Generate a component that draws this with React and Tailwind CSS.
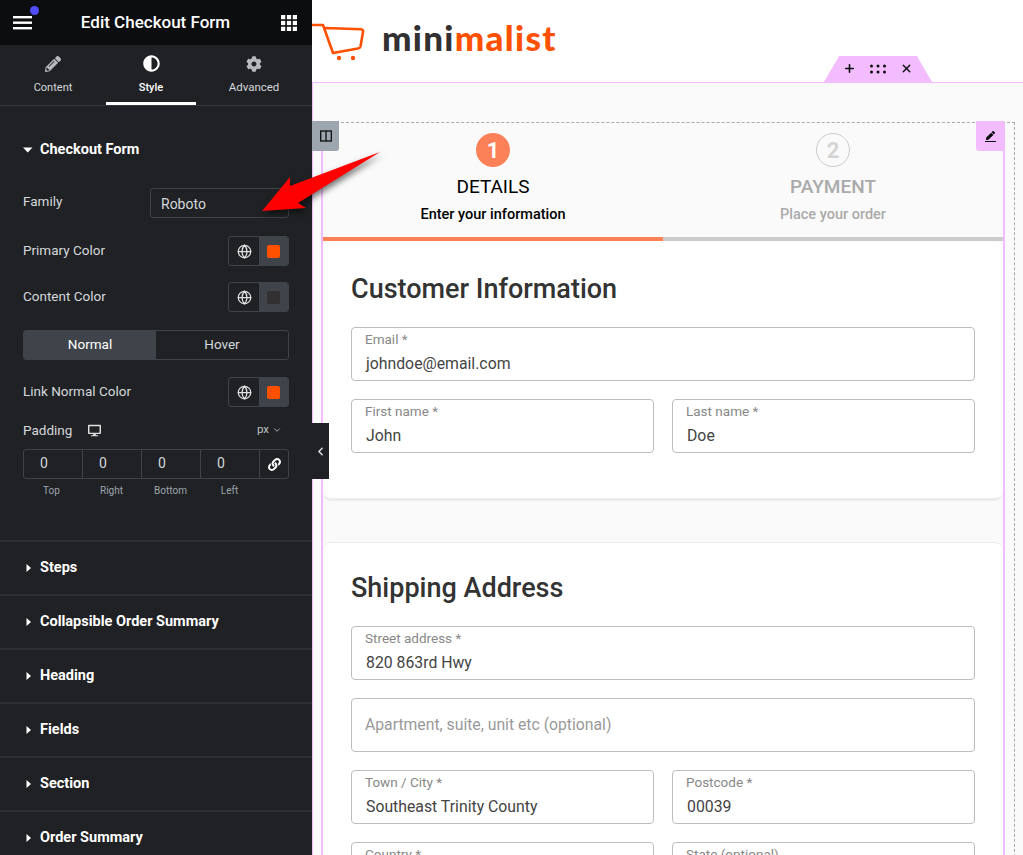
import React from 'react';
import { FaPencilAlt, FaAdjust, FaCog, FaDesktop, FaLink, FaPen } from 'react-icons/fa';
import { FiPlus, FiX, FiChevronDown, FiChevronLeft } from 'react-icons/fi';
import { Globe } from 'lucide-react';

const Caret = ({ down }) => (
    <svg width="10" height="10" viewBox="0 0 10 10" className="shrink-0" fill="#fff">
        {down ? <path d="M0 2.5h9.5L4.75 7.5z" /> : <path d="M2.5 1l4.5 4-4.5 4z" />}
    </svg>
);

const ColorRow = ({ label, color, className = '' }) => (
    <div className={`flex items-center justify-between h-[30px] pl-[23px] pr-[23px] ${className}`}>
        <span className="text-[13.5px] text-[#d5d8dc] -mt-[2px]">{label}</span>
        <div className="flex w-[61px] h-[30px] border border-[#3f444b] rounded-[3px] overflow-hidden">
            <div className="w-[30px] flex items-center justify-center">
                <Globe size={15} color="#e0e1e3" strokeWidth={2} />
            </div>
            <div className="flex-1 bg-[#3f444b] flex items-center justify-center">
                <div className={`w-[13px] h-[13px] rounded-[2px] ${color}`}></div>
            </div>
        </div>
    </div>
);

const Section = ({ title }) => (
    <div className="h-[54px] shrink-0 border-t-2 border-[#2d2f33] flex items-center gap-[6px] pl-[24px]">
        <Caret />
        <span className="text-[14.5px] font-bold text-white">{title}</span>
    </div>
);

const Field = ({ label, value, placeholder }) => (
    <div className="flex-1 min-h-[54px] border border-[#bdbdbd] rounded-[4px] bg-white pl-[13px] flex flex-col justify-center pb-[3px]">
        {placeholder ? (
            <span className="text-[15.75px] text-[#999] pt-[3px]">{placeholder}</span>
        ) : (
            <>
                <span className="text-[13.5px] leading-[18px] text-[#888]">{label}</span>
                <span className="text-[15.8px] leading-[24px] mt-[4px] ml-[1px] text-[#444]">{value}</span>
            </>
        )}
    </div>
);

const Sidebar = () => (
    <div className="w-[312px] h-[855px] shrink-0 bg-[#1f2124] flex flex-col overflow-hidden">
        <div className="h-[45px] shrink-0 bg-[#0c0d0e] flex items-center justify-between pl-[13px] pr-[15px] relative">
            <svg width="20" height="14" viewBox="0 0 20 14" fill="#fff">
                <rect y="0" width="19" height="2.4" />
                <rect y="5.5" width="19" height="2.4" />
                <rect y="11" width="19" height="2.4" />
            </svg>
            <div className="absolute top-[6px] left-[30px] w-[9px] h-[9px] rounded-full bg-[#524cff]"></div>
            <span className="text-[17px] font-medium text-white -ml-[3px]">Edit Checkout Form</span>
            <svg width="16" height="16" viewBox="0 0 15 15" fill="#fff">
                {[0, 5.5, 11].map((y) => [0, 5.5, 11].map((x) => <rect key={`${x}-${y}`} x={x} y={y} width="4" height="4" />))}
            </svg>
        </div>

        <div className="h-[61px] shrink-0 flex border-b border-[#33363a] pl-[16px] items-stretch">
            <div className="w-[74px] flex flex-col items-center pt-[11px] text-[#d5d8dc]">
                <FaPencilAlt size={16} color="#b6b9be" />
                <span className="text-[11px] mt-[8px]">Content</span>
            </div>
            <div className="w-[90px] ml-[16px] flex flex-col items-center pt-[10px] border-b-[3px] border-white text-white">
                <FaAdjust size={17} />
                <span className="text-[11px] font-medium mt-[8px]">Style</span>
            </div>
            <div className="flex-1 flex flex-col items-center pt-[11px] text-[#d5d8dc]">
                <FaCog size={16} color="#b6b9be" />
                <span className="text-[11.5px] mt-[7px]">Advanced</span>
            </div>
        </div>

        <div className="h-[434px] shrink-0 flex flex-col">
            <div className="flex items-center gap-[7px] pl-[23px] mt-[35px] h-[17px]">
                <Caret down />
                <span className="text-[14.5px] font-bold text-white">Checkout Form</span>
            </div>
            <div className="flex items-center justify-between px-[23px] mt-[30px] h-[30px]">
                <span className="text-[13.5px] text-[#d5d8dc] -mt-[4px]">Family</span>
                <div className="w-[139px] h-[30px] border border-[#3f444b] rounded-[3px] pl-[10px] pt-[2px] flex items-center text-[14px] text-[#d5d8dc]">Roboto</div>
            </div>
            <ColorRow label="Primary Color" color="bg-[#ff5000]" className="mt-[18px]" />
            <ColorRow label="Content Color" color="bg-[#333031]" className="mt-[16px]" />
            <div className="mx-[23px] mt-[18px] h-[30px] flex border border-[#3f444b] rounded-[3px] text-[13.5px]">
                <div className="w-[132px] bg-[#3f444b] text-white flex items-center justify-center pb-[1px]">Normal</div>
                <div className="flex-1 text-[#d5d8dc] flex items-center justify-center pb-[1px]">Hover</div>
            </div>
            <ColorRow label="Link Normal Color" color="bg-[#ff5000]" className="mt-[17px]" />
            <div className="flex items-center px-[23px] mt-[14px] h-[18px]">
                <span className="text-[13.5px] text-[#d5d8dc]">Padding</span>
                <FaDesktop size={13} color="#e0e1e3" className="ml-[16px]" />
                <span className="ml-auto text-[11.5px] text-[#c0c3c8]">px</span>
                <FiChevronDown size={10} color="#c0c3c8" className="ml-[3px] mr-[7px]" />
            </div>
            <div className="mx-[23px] mt-[10px] h-[30px] flex border border-[#3f444b] rounded-[3px] text-[14px] text-[#d5d8dc]">
                {[0, 1, 2, 3].map((i) => (
                    <div key={i} className="w-[59px] border-r border-[#3f444b] pl-[16px] pb-[2px] flex items-center">0</div>
                ))}
                <div className="flex-1 flex items-center justify-center">
                    <FaLink size={13} color="#fff" />
                </div>
            </div>
            <div className="mx-[23px] mt-[4px] flex text-[10px] text-[#9da5ae]">
                <span className="w-[59px] text-center pr-[2px]">Top</span>
                <span className="w-[59px] text-center">Right</span>
                <span className="w-[59px] text-center">Bottom</span>
                <span className="w-[59px] text-center">Left</span>
            </div>
        </div>

        <Section title="Steps" />
        <Section title="Collapsible Order Summary" />
        <Section title="Heading" />
        <Section title="Fields" />
        <Section title="Section" />
        <Section title="Order Summary" />
    </div>
);

const Logo = () => (
    <div className="flex items-start">
        <svg width="56" height="46" viewBox="0 0 56 46" fill="none" stroke="#ff5000" strokeWidth="2.6" strokeLinecap="round" strokeLinejoin="round" className="mt-[18px]">
            <path d="M0.5 7H11L21 35L46 30.5q2-.3 2.5-2L51 14q.4-2.5-2-2.8L13 10" />
            <circle cx="27" cy="40" r="2.2" fill="#ff5000" stroke="none" />
            <circle cx="41" cy="40" r="2.2" fill="#ff5000" stroke="none" />
        </svg>
        <span className="ml-[14px] mt-[20px] font-['Lato',sans-serif] font-black text-[35px] leading-none tracking-[1.3px] text-[#333031]">
            mini<span className="text-[#ff5000]">malist</span>
        </span>
    </div>
);

const Steps = () => (
    <div className="h-[114px] flex">
        <div className="w-1/2 flex flex-col items-center pt-[10px]">
            <div className="w-[34px] h-[34px] rounded-full bg-[#fc8058] text-white flex items-center justify-center text-[22px] font-bold">1</div>
            <div className="text-[19px] leading-[24px] text-black mt-[8px]">DETAILS</div>
            <div className="text-[14.5px] leading-[20px] font-medium text-black mt-[6px]">Enter your information</div>
        </div>
        <div className="w-1/2 flex flex-col items-center pt-[10px]">
            <div className="w-[34px] h-[34px] rounded-full border border-[#ccc] text-[#d4d4d4] flex items-center justify-center text-[22px] font-bold">2</div>
            <div className="text-[19px] leading-[24px] font-medium text-[#aaa] mt-[8px]">PAYMENT</div>
            <div className="text-[14.5px] leading-[20px] font-medium text-[#aaa] mt-[6px]">Place your order</div>
        </div>
    </div>
);

const Arrow = () => (
    <svg width="140" height="80" viewBox="0 0 140 80" className="absolute left-[255px] top-[145px] drop-shadow-[2px_3px_3px_rgba(0,0,0,0.55)]">
        <path d="M125 7L43 58l8 5-44 3 28-34v9z" fill="#f00" />
    </svg>
);

const App = () => {
    return (
        <div className="w-[1023px] h-[855px] overflow-hidden flex relative bg-white font-['Roboto',sans-serif]">
            <Sidebar />

            <div className="flex-1 h-[855px] bg-[#fafafa] flex flex-col overflow-hidden">
                <div className="h-[83px] shrink-0 bg-white border-b border-[#f3bcff]">
                    <Logo />
                </div>
                <div className="flex-1 border-l border-[#f3bcff] pl-[8px] pt-[39px] overflow-hidden">
                    <div className="w-[694px] h-[760px] border-t border-r border-dashed border-[#aaa] pr-[9px]">
                        <div className="w-[684px] border-l-2 border-r-2 border-[#f3bcff]">
                            <Steps />
                            <div className="flex h-[4px]">
                                <div className="w-1/2 bg-[#fc8058]"></div>
                                <div className="w-1/2 bg-[#ccc]"></div>
                            </div>
                            <div className="mt-px bg-white rounded-[8px] border-b-[3px] border-[#ececec] px-[28px] pt-[29px] pb-[45px]">
                                <h2 className="text-[27px] leading-[36px] font-medium text-[#333]">Customer Information</h2>
                                <div className="mt-[20px] flex flex-col gap-[18px]">
                                    <Field label="Email *" value="johndoe@email.com" />
                                    <div className="flex gap-[18px]">
                                        <Field label="First name *" value="John" />
                                        <Field label="Last name *" value="Doe" />
                                    </div>
                                </div>
                            </div>
                            <div className="mt-[41px] bg-white rounded-[8px] border-t border-[#ececec] px-[28px] pt-[27px]">
                                <h2 className="text-[27px] leading-[36px] font-medium text-[#333]">Shipping Address</h2>
                                <div className="mt-[20px] flex flex-col gap-[18px]">
                                    <Field label="Street address *" value="820 863rd Hwy" />
                                    <Field placeholder="Apartment, suite, unit etc (optional)" />
                                    <div className="flex gap-[18px]">
                                        <Field label="Town / City *" value="Southeast Trinity County" />
                                        <Field label="Postcode *" value="00039" />
                                    </div>
                                    <div className="flex gap-[18px]">
                                        <Field label="Country *" value="United States" />
                                        <Field label="State (optional)" value="California" />
                                    </div>
                                </div>
                            </div>
                        </div>
                    </div>
                </div>
            </div>

            {/* panel toggle */}
            <div className="absolute left-[312px] top-[423px] w-[17px] h-[56px] bg-[#1f2124] flex items-center justify-center">
                <FiChevronLeft size={13} color="#d5d8dc" strokeWidth={3} />
            </div>

            {/* section tab */}
            <div className="absolute left-[824px] top-[56px] w-[108px] h-[26px] bg-[#f3bcff] [clip-path:polygon(14%_0,86%_0,100%_100%,0_100%)] flex items-center justify-center gap-[14px] pb-[1px]">
                <FiPlus size={13} color="#0c0d0e" strokeWidth={3} />
                <svg width="16" height="10" viewBox="0 0 16 10" fill="#0c0d0e">
                    {[1.5, 8, 14.5].map((x) => [2, 8].map((y) => <circle key={`${x}-${y}`} cx={x} cy={y} r="1.5" />))}
                </svg>
                <FiX size={13} color="#0c0d0e" strokeWidth={2.5} />
            </div>

            {/* widget handles */}
            <div className="absolute left-[312px] top-[121px] w-[27px] h-[30px] bg-[#9da5ae] rounded-br-[3px] flex items-center justify-center">
                <svg width="12" height="12" viewBox="0 0 12 12" fill="none" stroke="#0c0d0e" strokeWidth="1.3">
                    <rect x="0.7" y="1" width="10.6" height="10" />
                    <path d="M6 1v10" />
                </svg>
            </div>
            <div className="absolute left-[976px] top-[121px] w-[28px] h-[30px] bg-[#f3bcff] rounded-bl-[3px] flex flex-col items-center justify-center">
                <FaPen size={9} color="#0c0d0e" />
                <div className="w-[11px] h-px bg-[#0c0d0e] mt-[1px]"></div>
            </div>

            <Arrow />
        </div>
    );
};

export default App;
